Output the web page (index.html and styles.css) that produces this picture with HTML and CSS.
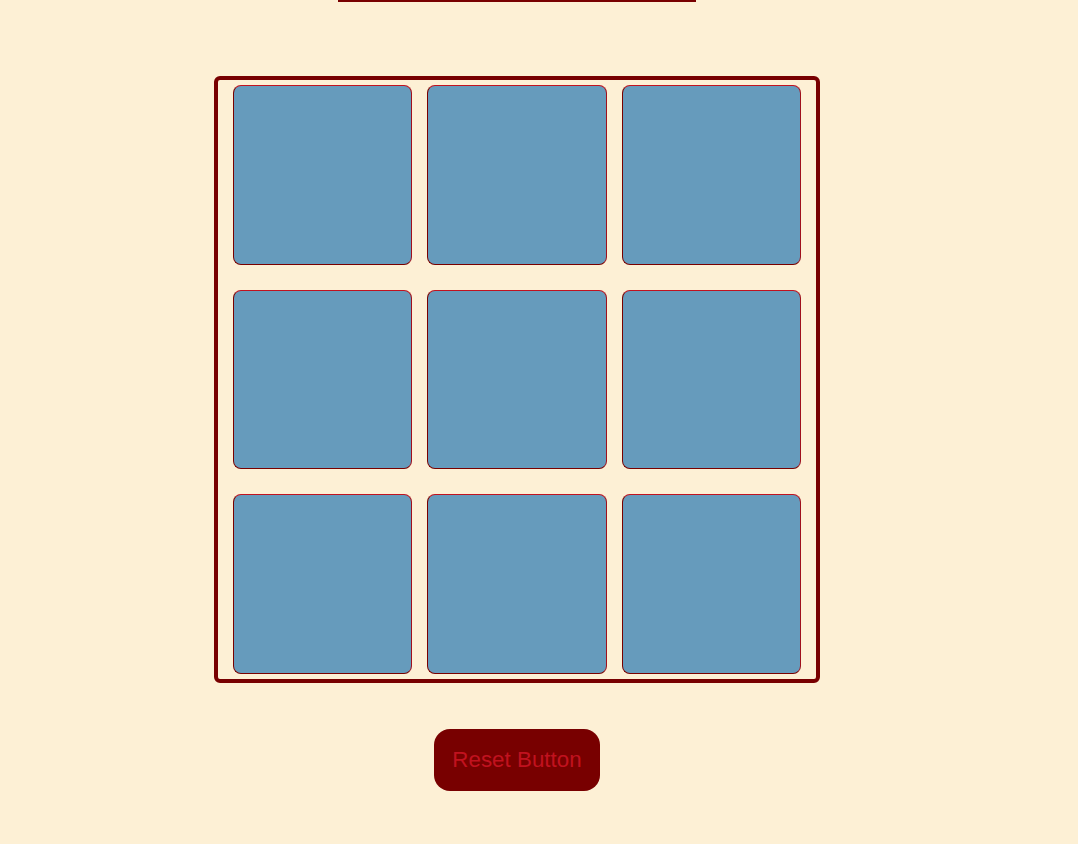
FILE: index.html
```html
<!DOCTYPE html>
<html lang="en">
<head>
<meta charset="utf-8">
<title>Tic Tac Toe</title>
<link rel="stylesheet" href="styles.css">
</head>
<body>
<main class="page">
  <div class="title-rule"></div>
  <div class="board">
    <button class="cell"></button>
    <button class="cell"></button>
    <button class="cell"></button>
    <button class="cell"></button>
    <button class="cell"></button>
    <button class="cell"></button>
    <button class="cell"></button>
    <button class="cell"></button>
    <button class="cell"></button>
  </div>
  <button class="reset">Reset Button</button>
</main>
</body>
</html>
```

FILE: styles.css
```css
html, body {
  margin: 0;
  padding: 0;
  background: #fdf0d5;
  font-family: "Liberation Sans", Arial, sans-serif;
}

.page {
  width: 1034px;
  height: 844px;
  display: flex;
  flex-direction: column;
  align-items: center;
}

.title-rule {
  width: 358px;
  height: 0;
  border-bottom: 2px solid #780000;
}

.board {
  margin-top: 74px;
  box-sizing: border-box;
  width: 606px;
  height: 607px;
  border: 4px solid #780000;
  border-radius: 6px;
  padding: 5px 0;
  display: grid;
  grid-template-columns: repeat(3, 179.5px);
  grid-template-rows: repeat(3, 179.5px);
  justify-content: space-evenly;
  row-gap: 25px;
}

.cell {
  box-sizing: border-box;
  margin: 0;
  padding: 0;
  background: #669bbc;
  border: 1px solid;
  border-color: #c1121f #a0101c #780000 #780000;
  border-radius: 8px;
  cursor: pointer;
}

.reset {
  margin-top: 46px;
  width: 166px;
  height: 62px;
  background: #780000;
  color: #c1121f;
  border: none;
  border-radius: 16px;
  font-family: "Liberation Sans", Arial, sans-serif;
  font-size: 22.4px;
  padding: 0 0 1px;
  cursor: pointer;
}
```
